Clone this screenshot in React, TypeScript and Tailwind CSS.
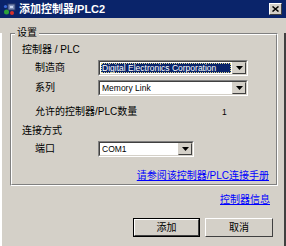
import React from "react";

const cjk = "font-['Liberation_Sans','Noto_Sans_CJK_SC',sans-serif]";

function Combo({ width, value, selected }: { width: string; value: string; selected?: boolean }) {
  return (
    <div className={`${width} h-[16px] border border-t-[#808080] border-l-[#808080] border-r-white border-b-white`}>
      <div className="flex h-full border border-t-[#404040] border-l-[#404040] border-r-[#d4d0c8] border-b-[#d4d0c8] bg-white">
        <div className="flex flex-1 items-center p-[1px]">
          <div
            className={
              selected
                ? "flex h-full w-full items-center bg-[#0a246a] pl-[1px] text-white outline-1 outline-dotted outline-[#e0d890] -outline-offset-1"
                : "flex h-full w-full items-center pl-[1px] text-black"
            }
          >
            <span className="text-[8.5px] leading-none font-['Liberation_Sans',sans-serif]">{value}</span>
          </div>
        </div>
        <div className="flex w-[14px] items-center justify-center border border-t-[#d4d0c8] border-l-[#d4d0c8] border-r-[#404040] border-b-[#404040] bg-[#d4d0c8]">
          <svg width="7" height="4" viewBox="0 0 7 4">
            <polygon points="0,0 7,0 3.5,4" fill="#000" />
          </svg>
        </div>
      </div>
    </div>
  );
}

export default function App() {
  return (
    <div className={`w-[286px] h-[246px] overflow-hidden bg-[#d4d0c8] text-black ${cjk} text-[10px] leading-none`}>
      <div className="flex h-[18px] items-center bg-[#0a246a] pl-[3px] pr-[4px]">
        <svg width="13" height="13" viewBox="0 0 13 13">
          <rect x="5" y="1" width="7" height="6" fill="#7d8fb8" stroke="#2d3c6c" strokeWidth="1" />
          <rect x="7" y="3" width="3" height="2" fill="#c9d6f2" />
          <circle cx="3.5" cy="9" r="2.5" fill="#2ca23a" />
          <circle cx="9" cy="10" r="2" fill="#d8322a" />
          <circle cx="2.5" cy="3.5" r="1.6" fill="#3a6ad8" />
        </svg>
        <span className="ml-[3px] font-bold text-white text-[11px]">添加控制器/PLC2</span>
        <div className="ml-auto flex h-[12px] w-[13px] items-center justify-center border border-t-white border-l-white border-r-[#404040] border-b-[#404040] bg-[#d4d0c8]">
          <svg width="7" height="6" viewBox="0 0 7 6">
            <path d="M0.5 0.5 L6.5 5.5 M6.5 0.5 L0.5 5.5" stroke="#000" strokeWidth="1.5" />
          </svg>
        </div>
      </div>

      <div className="h-[228px] border-2 border-t-0 border-l-white border-r-[#404040] border-b-[#404040]">
        <div className="relative ml-[8px] mt-[15px] h-[153px] w-[268px] border border-t-[#808080] border-l-[#808080] border-r-white border-b-white">
          <span className="absolute left-[4px] top-[-6px] bg-[#d4d0c8] px-[2px]">设置</span>
          <div className="flex h-full flex-col border border-t-white border-l-white border-r-[#808080] border-b-[#808080] pl-[10px] pr-[7px]">
            <div className="mt-[8px] flex h-[14px] items-center">控制器 / PLC</div>
            <div className="mt-[3px] flex h-[16px] items-center pl-[13px]">
              <span className="w-[63px]">制造商</span>
              <Combo width="w-[150px]" value="Digital Electronics Corporation" selected />
            </div>
            <div className="mt-[4px] flex h-[16px] items-center pl-[13px]">
              <span className="w-[63px]">系列</span>
              <Combo width="w-[150px]" value="Memory Link" />
            </div>
            <div className="mt-[9px] flex h-[14px] items-center pl-[13px]">
              <span className="w-[187px]">允许的控制器/PLC数量</span>
              <span className="text-[8.5px]">1</span>
            </div>
            <div className="mt-[5px] flex h-[14px] items-center">连接方式</div>
            <div className="mt-[3px] flex h-[16px] items-center pl-[13px]">
              <span className="w-[63px]">端口</span>
              <Combo width="w-[96px]" value="COM1" />
            </div>
            <div className="mt-[13px] flex h-[12px] items-center justify-end">
              <span className="text-[#0000ff] underline">请参阅该控制器/PLC连接手册</span>
            </div>
          </div>
        </div>

        <div className="mt-[8px] mr-[14px] flex h-[12px] items-center justify-end">
          <span className="text-[#0000ff] underline">控制器信息</span>
        </div>

        <div className="mt-[12px] mr-[11px] flex justify-end gap-[5px]">
          <div className="h-[19px] w-[67px] border border-black">
            <div className="flex h-full items-center justify-center border border-t-white border-l-white border-r-[#404040] border-b-[#404040]">
              添加
            </div>
          </div>
          <div className="flex h-[19px] w-[68px] items-center justify-center border border-t-white border-l-white border-r-[#404040] border-b-[#404040]">
            取消
          </div>
        </div>
      </div>
    </div>
  );
}
